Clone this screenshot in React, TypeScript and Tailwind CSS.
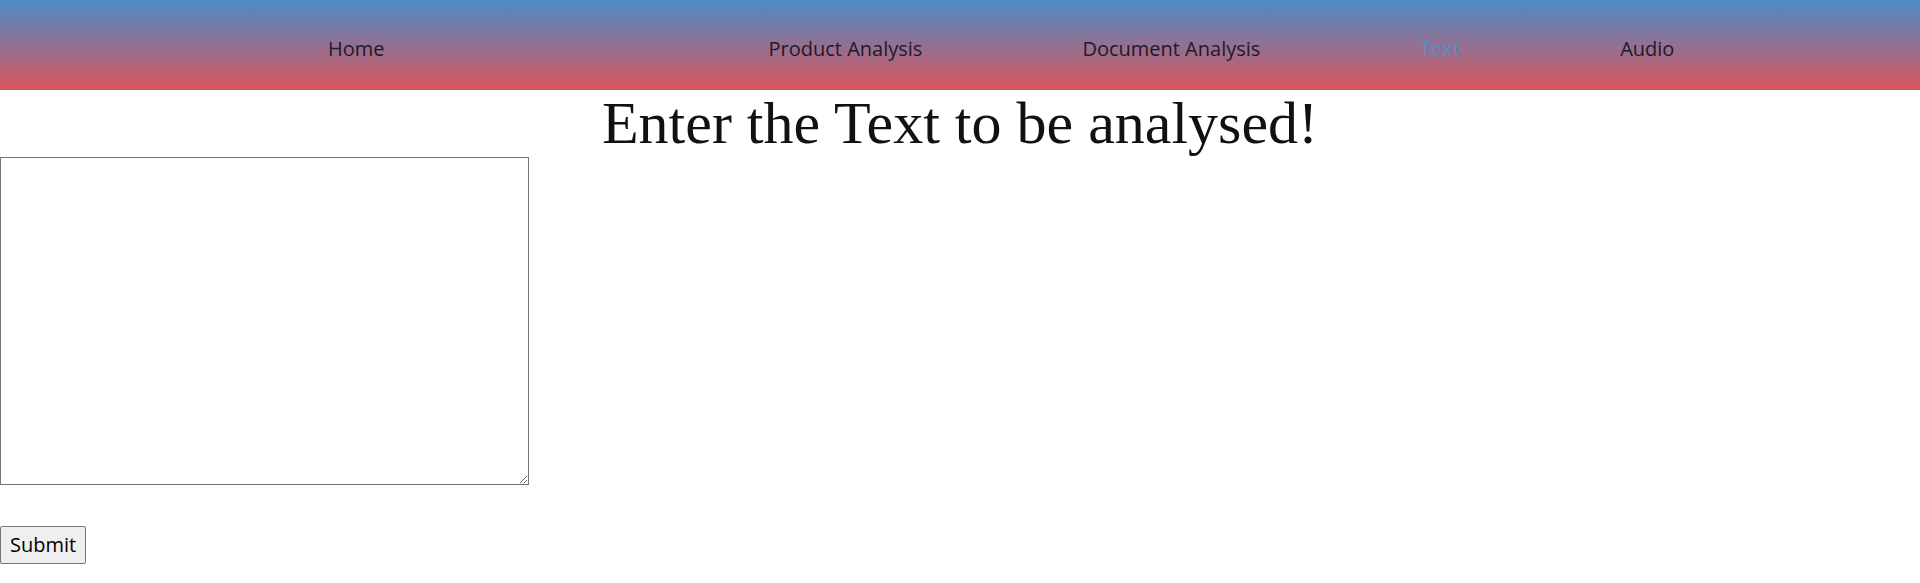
import React from "react";

export default function App() {
  const font = { fontFamily: '"Open Sans", "Liberation Sans", sans-serif' };
  return (
    <div className="w-[1920px] h-[583px] bg-white overflow-hidden">
      <nav
        className="h-[90px] w-full bg-linear-to-b/srgb from-[#4e8ac7] to-[#d8565c] flex items-start pt-[35px] pl-[328px] text-[20px] leading-[28px] text-[#1c1b2a]"
        style={font}
      >
        <span className="mr-[384px]">Home</span>
        <span className="mr-[160px]">Product Analysis</span>
        <span className="mr-[160px]">Document Analysis</span>
        <span className="mr-[160px] text-[#4b8fd1]">Text</span>
        <span>Audio</span>
      </nav>
      <h1
        className="text-center text-[60px] leading-[67px] text-[#111]"
        style={{ fontFamily: '"Liberation Serif", "Times New Roman", serif' }}
      >
        Enter the Text to be analysed!
      </h1>
      <textarea className="block w-[529px] h-[328px] border border-[#767676] bg-white" style={{ resize: "both" }} />
      <button
        className="mt-[41px] h-[38px] px-[9px] border border-[#767676] rounded-[2px] bg-[#efefef] text-[20px] leading-[28px] text-black"
        style={font}
      >
        Submit
      </button>
    </div>
  );
}
